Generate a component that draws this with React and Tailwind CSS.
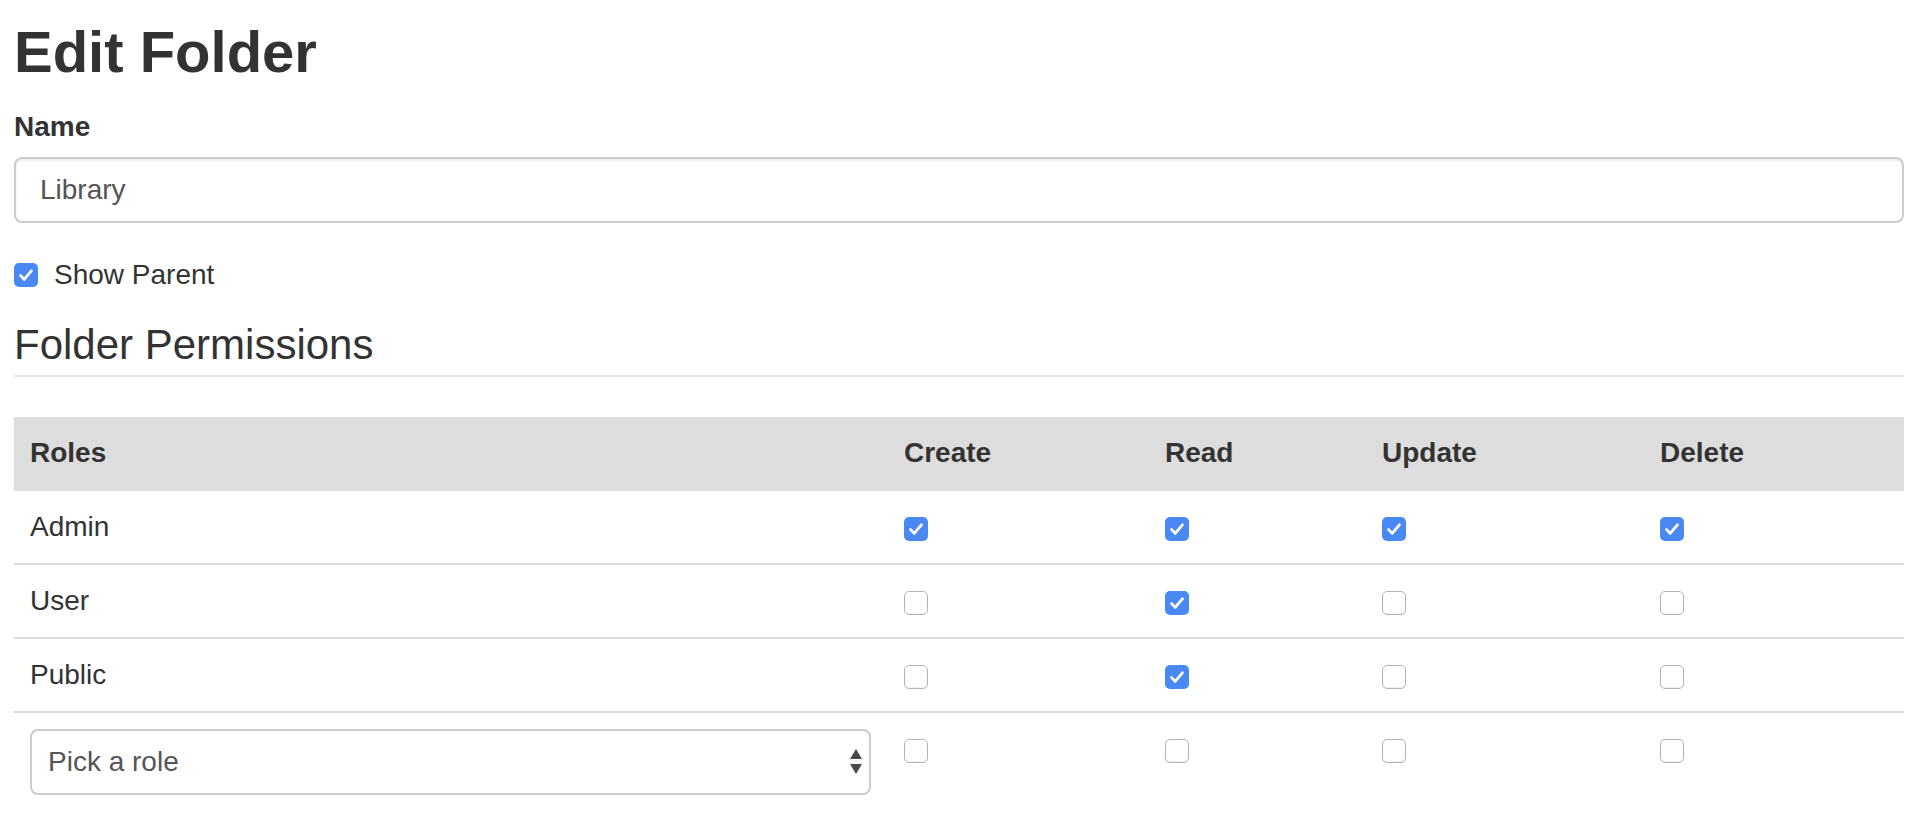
import { useState } from 'react';

const roles = [
  { nombre: 'Admin', permisos: [true, true, true, true] },
  { nombre: 'User', permisos: [false, true, false, false] },
  { nombre: 'Public', permisos: [false, true, false, false] },
];

function Casilla({ checked, onClick, className = '' }) {
  if (checked) {
    return (
      <span onClick={onClick} className={`flex h-6 w-6 shrink-0 items-center justify-center rounded-[5px] bg-[#4a89f3] ${className}`}>
        <svg viewBox="0 0 24 24" className="h-6 w-6">
          <path d="M6.6 12.6l3.6 3.8L17.4 7.8" fill="none" stroke="white" strokeWidth="2.8" strokeLinecap="round" strokeLinejoin="round" />
        </svg>
      </span>
    );
  }
  return (
    <span onClick={onClick} className={`block h-6 w-6 shrink-0 rounded-[5px] border-[1.5px] border-[#b3b3b3] bg-white shadow-[inset_0_-1px_1px_rgba(0,0,0,0.06)] ${className}`} />
  );
}

export default function App() {
  const [mostrarPadre, setMostrarPadre] = useState(true);
  const [filas, setFilas] = useState(roles);

  const cambiar = (i, j) => {
    setFilas(filas.map((f, k) => k === i ? { ...f, permisos: f.permisos.map((p, m) => m === j ? !p : p) } : f));
  };

  return (
    <div className="min-h-[818px] bg-white pl-[14px] pr-[24px] font-['Liberation_Sans',Arial,sans-serif] text-[28px] leading-10 text-[#333]">
      <h1 className="mt-[19px] mb-[22px] text-[58px] font-bold leading-[66px]">Edit Folder</h1>

      <div className="mb-[32px]">
        <label className="mb-[10px] inline-block font-bold">Name</label>
        <div className="flex h-[66px] items-center rounded-[8px] border-2 border-[#ccc] px-6 text-[#555] shadow-[inset_0_2px_2px_rgba(0,0,0,0.075)]">
          Library
        </div>
      </div>

      <div className="mb-5 flex items-start gap-4">
        <Casilla checked={mostrarPadre} onClick={() => setMostrarPadre(!mostrarPadre)} className="mt-2" />
        <span>Show Parent</span>
      </div>

      <div className="mb-10 border-b-2 border-[#e5e5e5] text-[42px] leading-[60px]">Folder Permissions</div>

      <table className="w-full table-fixed border-collapse text-left">
        <colgroup>
          <col className="w-[874px]" />
          <col className="w-[261px]" />
          <col className="w-[217px]" />
          <col className="w-[278px]" />
          <col />
        </colgroup>
        <thead>
          <tr className="bg-[#ddd]">
            <th className="p-4 font-bold">Roles</th>
            <th className="p-4 font-bold">Create</th>
            <th className="p-4 font-bold">Read</th>
            <th className="p-4 font-bold">Update</th>
            <th className="p-4 font-bold">Delete</th>
          </tr>
        </thead>
        <tbody>
          {filas.map((fila, i) => (
            <tr key={fila.nombre} className="border-t-2 border-[#ddd]">
              <td className="p-4 align-top">{fila.nombre}</td>
              {fila.permisos.map((p, j) => (
                <td key={j} className="p-4 align-top">
                  <Casilla checked={p} onClick={() => cambiar(i, j)} className="mt-[10px]" />
                </td>
              ))}
            </tr>
          ))}
          <tr className="border-t-2 border-[#ddd]">
            <td className="p-4 pr-[17px] align-top">
              <div className="relative">
                <select className="h-[66px] w-full appearance-none rounded-[8px] border-2 border-[#ccc] bg-white pl-4 text-[#555] outline-none" defaultValue="">
                  <option value="">Pick a role</option>
                  <option>Admin</option>
                  <option>User</option>
                  <option>Public</option>
                </select>
                {/* flechas del select */}
                <svg viewBox="0 0 12 26" className="pointer-events-none absolute right-[9px] top-[20px] h-[26px] w-3">
                  <path d="M6 0L12 10H0Z" fill="#4a4a4a" />
                  <path d="M0 15H12L6 25Z" fill="#4a4a4a" />
                </svg>
              </div>
            </td>
            {[0, 1, 2, 3].map((j) => (
              <td key={j} className="p-4 align-top">
                <Casilla checked={false} className="mt-[10px]" />
              </td>
            ))}
          </tr>
        </tbody>
      </table>
    </div>
  );
}
